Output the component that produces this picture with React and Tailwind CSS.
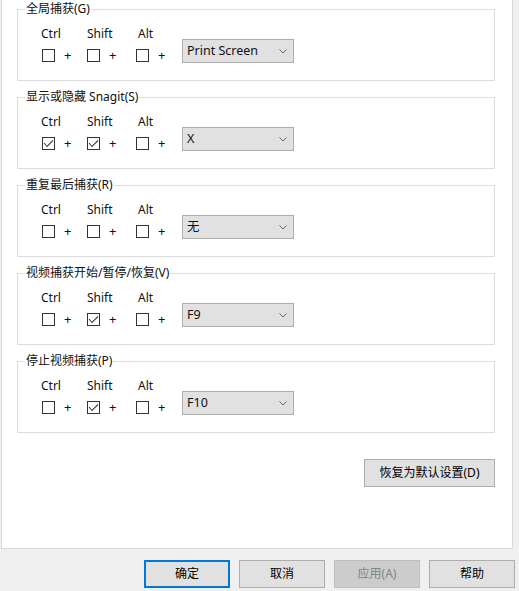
const hotkeys = [
  { title: '全局捕获(G)', ctrl: false, shift: false, alt: false, key: 'Print Screen' },
  { title: '显示或隐藏 Snagit(S)', ctrl: true, shift: true, alt: false, key: 'X' },
  { title: '重复最后捕获(R)', ctrl: false, shift: false, alt: false, key: '无' },
  { title: '视频捕获开始/暂停/恢复(V)', ctrl: false, shift: true, alt: false, key: 'F9' },
  { title: '停止视频捕获(P)', ctrl: false, shift: true, alt: false, key: 'F10' },
];

const Checkbox = ({ checked }) => (
  <span className="w-[13px] h-[13px] border border-[#333] bg-white flex items-center justify-center">
    {checked && (
      <svg width="11" height="11" viewBox="0 0 11 11">
        <polyline points="1,5 4,8.5 10,2.5" fill="none" stroke="#444" strokeWidth="1.1" />
      </svg>
    )}
  </span>
);

const Modifier = ({ label, checked, width, shift }) => (
  <div className="flex flex-col" style={{ width }}>
    <span className="leading-[16px]" style={{ marginLeft: shift }}>{label}</span>
    <div className="flex items-center h-[16px] mt-[5px]">
      <Checkbox checked={checked} />
      <span className="ml-[9px] leading-[16px] text-[13px]">+</span>
    </div>
  </div>
);

const Select = ({ value }) => (
  <div className="mt-[29px] w-[112px] h-[24px] bg-[#e1e1e1] border border-[#adadad] flex items-center justify-between pl-[4px] pr-[6px]">
    <span className="leading-[16px] text-[12.5px]">{value}</span>
    <svg width="8" height="5" viewBox="0 0 8 5">
      <polyline points="0.5,0.5 4,4 7.5,0.5" fill="none" stroke="#666" strokeWidth="1" />
    </svg>
  </div>
);

const HotkeyGroup = ({ item }) => (
  <div className="relative w-[478px] h-[72px] border border-[#dcdcdc]">
    <span className="absolute left-[7px] top-[-9px] bg-white px-[1px] leading-[16px]">{item.title}</span>
    <div className="flex pl-[24px]">
      <div className="flex pt-[16px]">
        <Modifier label="Ctrl" checked={item.ctrl} width={45} shift={-1} />
        <Modifier label="Shift" checked={item.shift} width={49} shift={0} />
        <Modifier label="Alt" checked={item.alt} width={46} shift={2} />
      </div>
      <Select value={item.key} />
    </div>
  </div>
);

const Button = ({ children, primary, disabled, className = '' }) => (
  <button
    className={
      'h-[28px] flex items-center justify-center leading-[16px] ' +
      (primary
        ? 'border-2 border-[#0078d7] bg-[#e1e1e1] text-black '
        : disabled
        ? 'border border-[#bfbfbf] bg-[#cccccc] text-[#838383] '
        : 'border border-[#adadad] bg-[#e1e1e1] text-black ') +
      className
    }
  >
    {children}
  </button>
);

export default function App() {
  return (
    <div
      className="w-[519px] h-[591px] bg-[#f0f0f0] text-[12px] text-[#111]"
      style={{ fontFamily: '"Noto Sans", "Noto Sans CJK SC", sans-serif' }}
    >
      <div className="ml-[1px] w-[512px] h-[549px] bg-white border-l border-r border-b border-[#d9d9d9] pl-[15px] pt-[9px]">
        <div className="flex flex-col gap-[16px]">
          {hotkeys.map((item) => (
            <HotkeyGroup key={item.title} item={item} />
          ))}
        </div>
        <div className="w-[478px] flex justify-end mt-[26px]">
          <Button className="w-[131px]">恢复为默认设置(D)</Button>
        </div>
      </div>
      <div className="flex justify-end gap-[9px] pr-[4px] mt-[11px]">
        <Button primary className="w-[86px]">确定</Button>
        <Button className="w-[86px]">取消</Button>
        <Button disabled className="w-[86px]">应用(A)</Button>
        <Button className="w-[86px]">帮助</Button>
      </div>
    </div>
  );
}
